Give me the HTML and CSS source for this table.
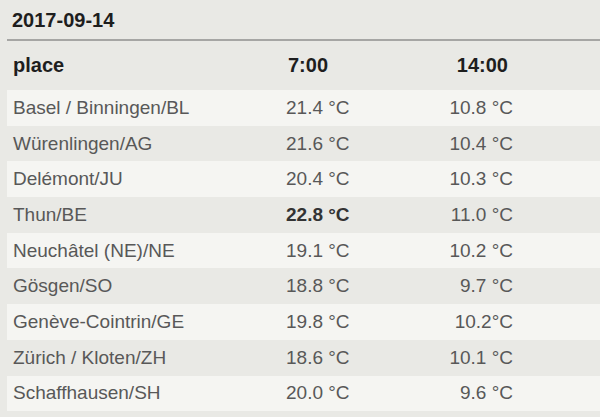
FILE: index.html
```html
<!DOCTYPE html>
<html>
<head>
<meta charset="utf-8">
<link rel="stylesheet" href="styles.css">
</head>
<body>
<div class="wrap">
  <div class="date">2017-09-14</div>
  <div class="table">
    <div class="row head"><div>place</div><div class="h2">7:00</div><div class="c3">14:00</div></div>
    <div class="row odd"><div>Basel / Binningen/BL</div><div>21.4 °C</div><div class="c3">10.8 °C</div></div>
    <div class="row"><div>Würenlingen/AG</div><div>21.6 °C</div><div class="c3">10.4 °C</div></div>
    <div class="row odd"><div>Delémont/JU</div><div>20.4 °C</div><div class="c3">10.3 °C</div></div>
    <div class="row"><div>Thun/BE</div><div class="max">22.8 °C</div><div class="c3">11.0 °C</div></div>
    <div class="row odd"><div>Neuchâtel (NE)/NE</div><div>19.1 °C</div><div class="c3">10.2 °C</div></div>
    <div class="row"><div>Gösgen/SO</div><div>18.8 °C</div><div class="c3">9.7 °C</div></div>
    <div class="row odd"><div>Genève-Cointrin/GE</div><div>19.8 °C</div><div class="c3">10.2°C</div></div>
    <div class="row"><div>Zürich / Kloten/ZH</div><div>18.6 °C</div><div class="c3">10.1 °C</div></div>
    <div class="row odd"><div>Schaffhausen/SH</div><div>20.0 °C</div><div class="c3">9.6 °C</div></div>
  </div>
</div>
</body>
</html>
```
FILE: styles.css
```css
html, body {
  margin: 0;
  padding: 0;
  background: #e9e9e5;
}
body {
  width: 600px;
  height: 417px;
  overflow: hidden;
  font-family: "Liberation Sans", Arial, sans-serif;
}
.wrap {
  padding-left: 7px;
}
.date {
  height: 39px;
  line-height: 40px;
  padding-left: 5px;
  font-size: 20px;
  font-weight: bold;
  color: #1e1e1e;
  border-bottom: 2px solid #a6a6a4;
}
.table {
  display: flex;
  flex-direction: column;
}
.row {
  display: grid;
  grid-template-columns: 273px 150px 77px 1fr;
  padding-left: 6px;
  height: 35.7px;
  align-items: center;
  font-size: 19px;
  color: #585858;
}
.row.head {
  height: 49px;
  font-size: 20px;
  font-weight: bold;
  color: #1e1e1e;
}
.h2 {
  padding-left: 2px;
}
.row.odd {
  background: #f5f5f2;
}
.c3 {
  text-align: right;
}
.head .c3 {
  padding-right: 5px;
}
.max {
  font-weight: bold;
  color: #333333;
}
```
